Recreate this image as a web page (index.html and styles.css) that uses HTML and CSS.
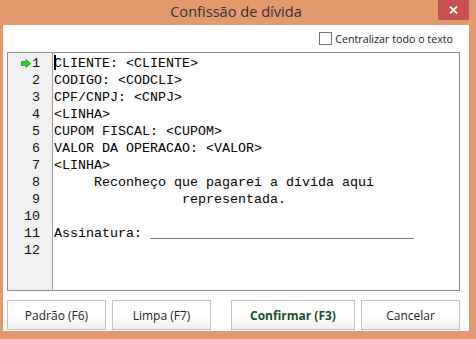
FILE: index.html
```html
<!DOCTYPE html>
<html lang="pt">
<head>
<meta charset="utf-8">
<title>Confissão de dívida</title>
<link rel="stylesheet" href="styles.css">
</head>
<body>
<div class="window">
  <div class="titlebar">
    <span class="title">Confissão de dívida</span>
    <div class="close">
      <svg width="9" height="8" viewBox="0 0 9 8"><path d="M1 0.5 L8 7.5 M8 0.5 L1 7.5" stroke="#fff" stroke-width="1.8" fill="none"/></svg>
    </div>
  </div>
  <div class="client">
    <div class="opts">
      <label class="check"><span class="box"></span><span class="label">Centralizar todo o texto</span></label>
    </div>
    <div class="editor">
      <div class="gutter">
        <div class="num"><svg class="arrow" width="10" height="9" viewBox="0 0 10 9"><path d="M0.5 2.5 H5 V0.5 L9.5 4.5 L5 8.5 V6.5 H0.5 Z" fill="#1fe01f" stroke="#3a7a3a" stroke-width="0.8"/></svg>1</div>
        <div class="num">2</div>
        <div class="num">3</div>
        <div class="num">4</div>
        <div class="num">5</div>
        <div class="num">6</div>
        <div class="num">7</div>
        <div class="num">8</div>
        <div class="num">9</div>
        <div class="num">10</div>
        <div class="num">11</div>
        <div class="num">12</div>
      </div>
      <div class="code">
        <div class="line"><span class="caret"></span>CLIENTE: &lt;CLIENTE&gt;</div>
        <div class="line">CODIGO: &lt;CODCLI&gt;</div>
        <div class="line">CPF/CNPJ: &lt;CNPJ&gt;</div>
        <div class="line">&lt;LINHA&gt;</div>
        <div class="line">CUPOM FISCAL: &lt;CUPOM&gt;</div>
        <div class="line">VALOR DA OPERACAO: &lt;VALOR&gt;</div>
        <div class="line">&lt;LINHA&gt;</div>
        <div class="line">     Reconheço que pagarei a dívida aqui</div>
        <div class="line">                representada.</div>
        <div class="line"> </div>
        <div class="line">Assinatura: _________________________________</div>
        <div class="line"> </div>
      </div>
    </div>
    <div class="buttons">
      <button class="btn">Padrão (F6)</button>
      <button class="btn">Limpa (F7)</button>
      <button class="btn wide primary">Confirmar (F3)</button>
      <button class="btn">Cancelar</button>
    </div>
  </div>
</div>
</body>
</html>
```
FILE: styles.css
```css
* { box-sizing: border-box; }
html, body { margin: 0; padding: 0; }
body {
  width: 476px;
  height: 339px;
  background: #e3996e;
  overflow: hidden;
  font-family: "Open Sans", "Noto Sans", sans-serif;
}
.window {
  display: flex;
  flex-direction: column;
  width: 476px;
  height: 339px;
}
.titlebar {
  position: relative;
  height: 25px;
  padding: 0 7px 0 3px;
  text-align: center;
  line-height: 23px;
}
.title {
  font-size: 14.6px;
  color: #333;
}
.close {
  position: absolute;
  left: 438px;
  top: 0;
  width: 31px;
  height: 20px;
  background: #c75050;
  display: flex;
  align-items: center;
  justify-content: center;
}
.close svg { display: block; }
.client {
  margin-left: 3px;
  width: 466px;
  height: 306px;
  background: #fff;
  padding: 0 9px 1px 4px;
  display: flex;
  flex-direction: column;
}
.opts {
  height: 27px;
  display: flex;
  justify-content: flex-end;
  align-items: center;
  padding-right: 7px;
}
.check {
  display: flex;
  align-items: center;
  gap: 3px;
}
.box {
  width: 13px;
  height: 13px;
  border: 1px solid #707070;
  background: #fff;
}
.label {
  font-size: 10.7px;
  color: #1a1a1a;
  line-height: 14px;
}
.editor {
  height: 239px;
  border: 1px solid #8c8c8c;
  display: flex;
}
.gutter {
  width: 45px;
  background: #f0f0f0;
  border-right: 1px solid #a0a0a0;
  padding: 2px 12px 0 0;
  font-family: "Liberation Mono", "Courier New", monospace;
  font-size: 13.33px;
  color: #111;
}
.num {
  height: 17px;
  line-height: 17px;
  display: flex;
  justify-content: flex-end;
  align-items: center;
  white-space: pre;
}
.arrow { display: block; margin-right: 1px; }
.code {
  flex: 1;
  padding: 2px 0 0 1px;
  font-family: "Liberation Mono", "Courier New", monospace;
  font-size: 13.33px;
  color: #000;
}
.line {
  height: 17px;
  line-height: 17px;
  white-space: pre;
}
.caret {
  display: inline-block;
  width: 2px;
  height: 15px;
  margin-right: -2px;
  background: #000;
  vertical-align: -3px;
}
.buttons {
  margin-top: 9px;
  height: 30px;
  display: flex;
}
.btn {
  width: 99px;
  height: 30px;
  margin: 0;
  padding: 0;
  border: 1px solid #c2c2c2;
  background: linear-gradient(#ffffff 0%, #ffffff 55%, #eeeeee 100%);
  font-family: "Open Sans", "Noto Sans", sans-serif;
  font-size: 12px;
  color: #222;
}
.btn + .btn { margin-left: 6px; }
.btn.wide { width: 124px; margin-left: 20px; }
.btn.primary { font-weight: bold; color: #14502e; }
```
